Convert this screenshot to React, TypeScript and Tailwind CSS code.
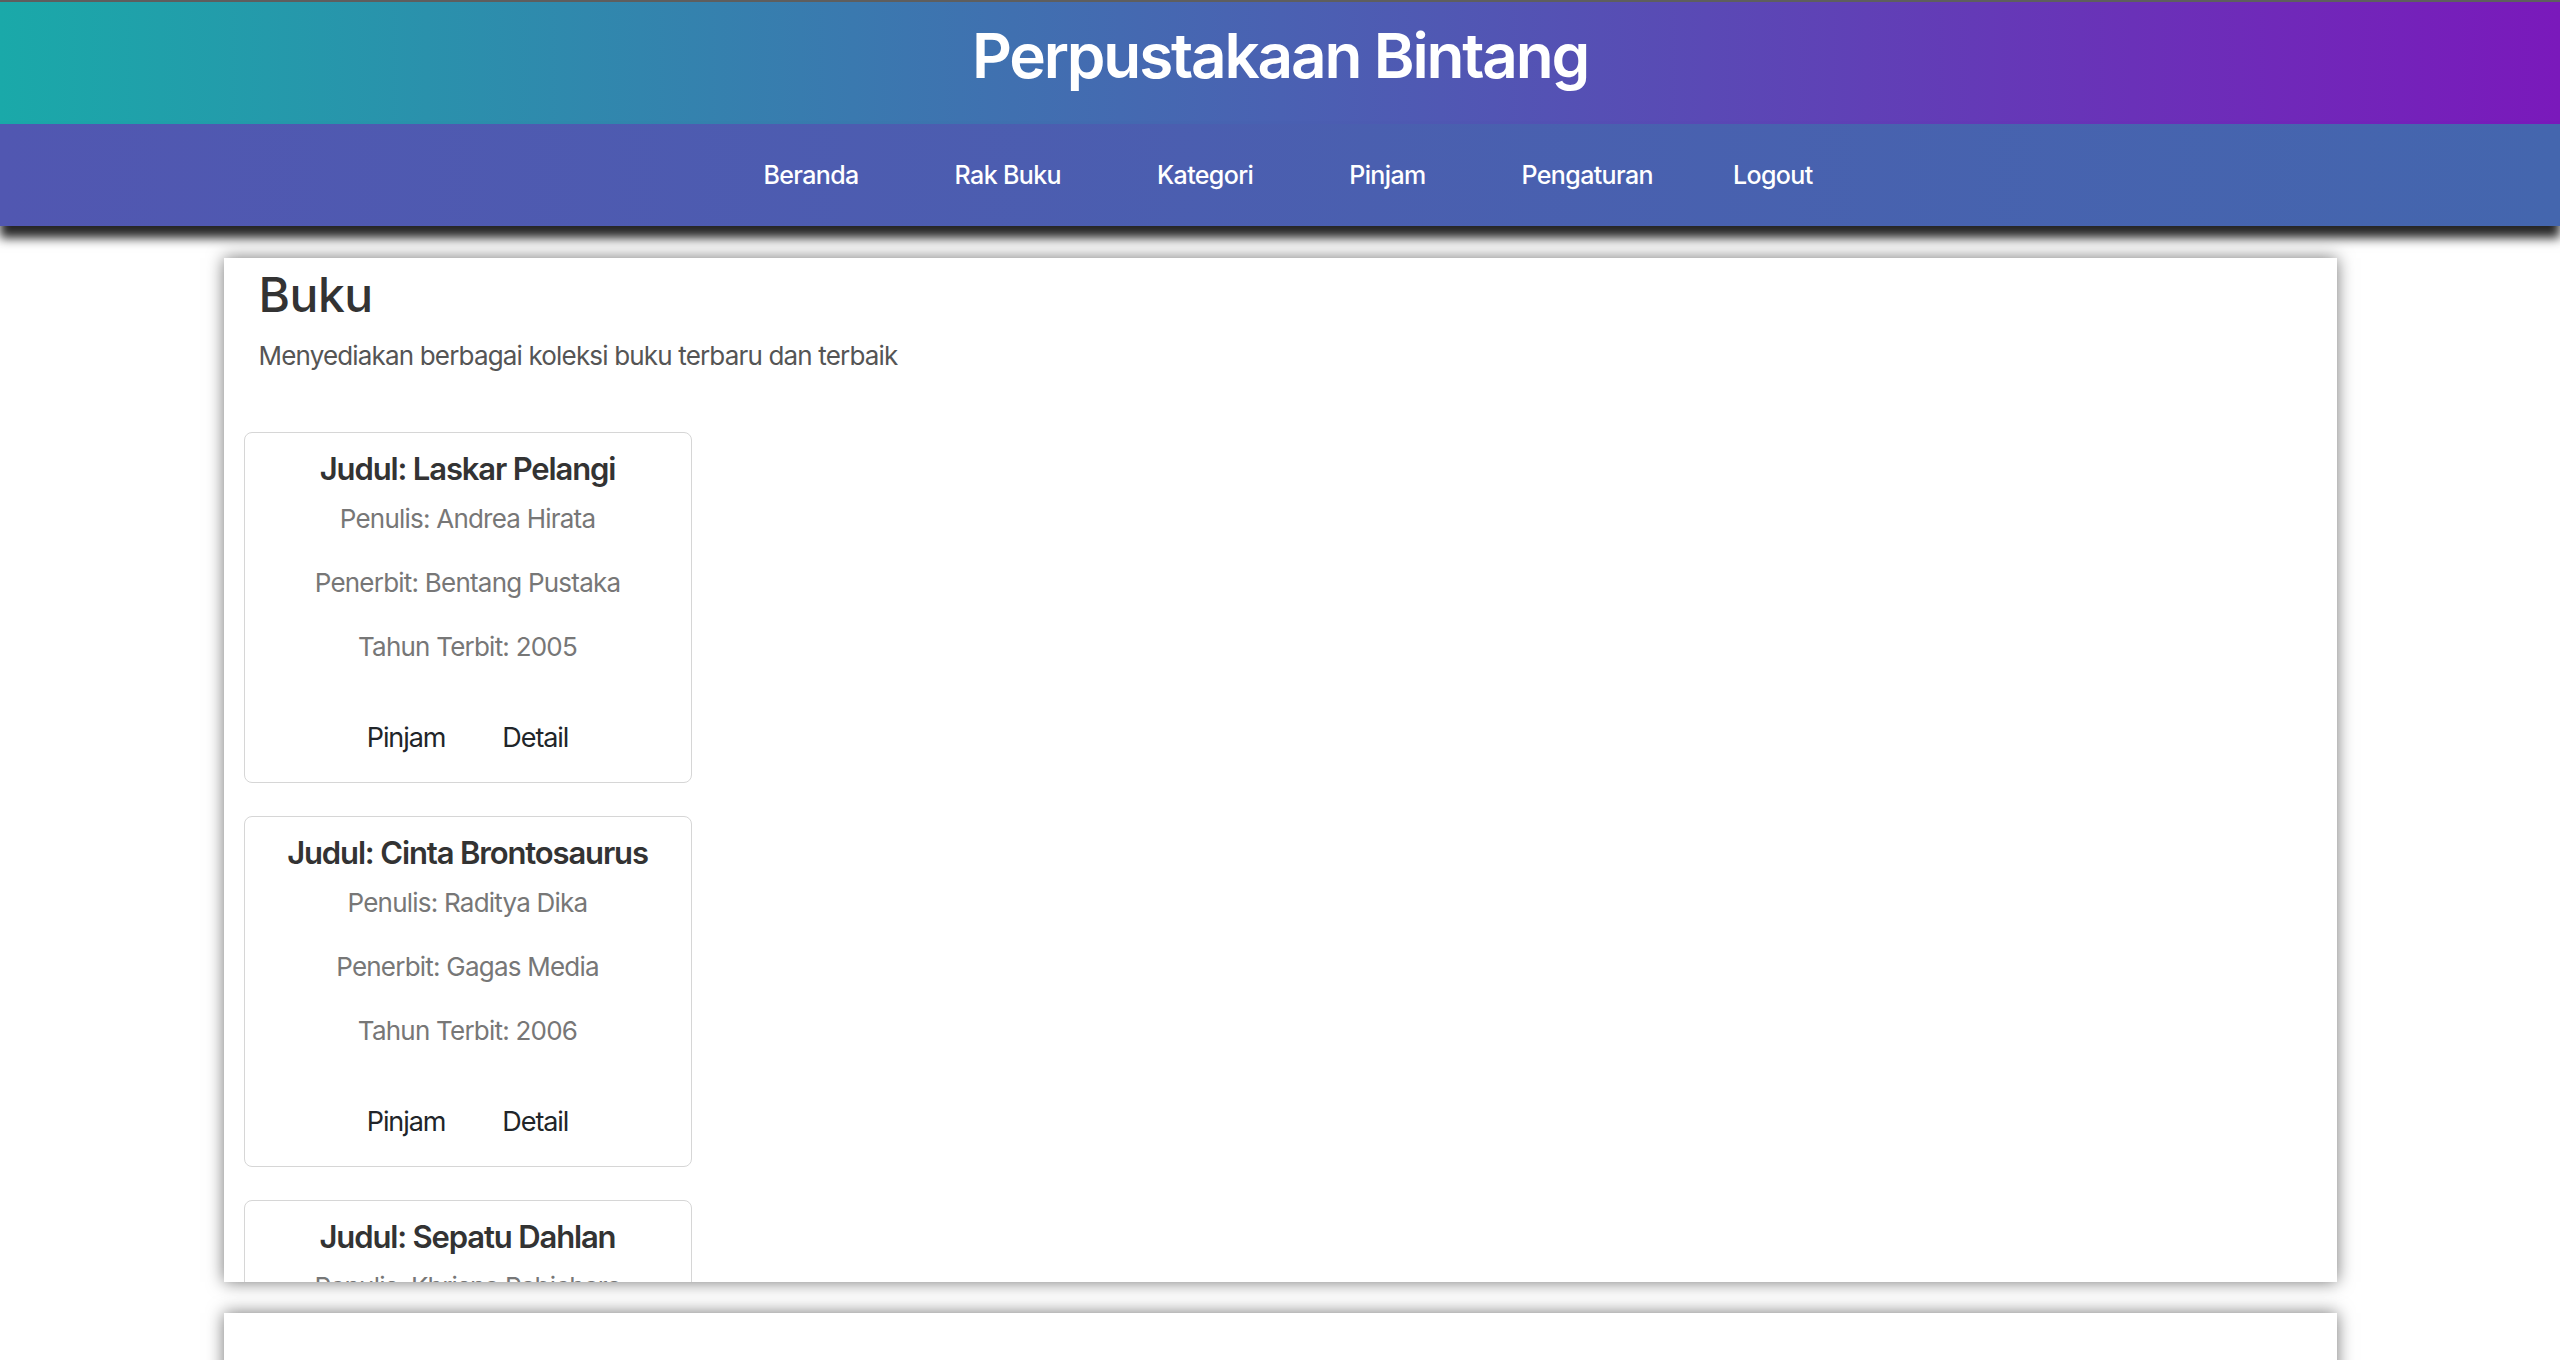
const menu = ["Beranda", "Rak Buku", "Kategori", "Pinjam", "Pengaturan"];

const books = [
  { judul: "Laskar Pelangi", penulis: "Andrea Hirata", penerbit: "Bentang Pustaka", tahun: "2005" },
  { judul: "Cinta Brontosaurus", penulis: "Raditya Dika", penerbit: "Gagas Media", tahun: "2006" },
  { judul: "Sepatu Dahlan", penulis: "Khrisna Pabichara", penerbit: "Noura Books", tahun: "2012" },
];

function BookCard({ book }: { book: (typeof books)[number] }) {
  return (
    <div className="w-[448px] shrink-0 border border-[#d6d6d6] rounded-lg pt-5 pb-[31px] flex flex-col items-center text-center">
      <h3 className="text-[31px] leading-none font-semibold tracking-[-0.037em] text-[#333]">Judul: {book.judul}</h3>
      <div className="mt-[22px] flex flex-col gap-[38px] text-[26px] leading-none tracking-[-0.03em] text-[#777]">
        <p>Penulis: {book.penulis}</p>
        <p>Penerbit: {book.penerbit}</p>
        <p>Tahun Terbit: {book.tahun}</p>
      </div>
      <div className="mt-[64px] flex gap-[57px] text-[27px] leading-none tracking-[-0.04em] text-[#212529]">
        <button>Pinjam</button>
        <button>Detail</button>
      </div>
    </div>
  );
}

export default function App() {
  return (
    <div className="h-[1360px] overflow-hidden bg-white font-['Inter',sans-serif]">
      <header className="h-[124px] border-t-2 border-[#5e5e5e] bg-[linear-gradient(to_right,#1aa9a9,#7a19bb)] flex justify-center pt-[23px]">
        <h1 className="text-[62px] leading-none font-semibold tracking-[-0.035em] text-white">Perpustakaan Bintang</h1>
      </header>
      <nav className="relative z-10 h-[102px] flex justify-center items-center bg-[linear-gradient(to_right,#5157b1,#4466ae)] shadow-[0_12px_10px_rgba(0,0,0,0.85)]">
        {menu.map((m) => (
          <a key={m} href="#" className="px-12 text-[25px] leading-none font-medium tracking-[-0.025em] text-white">
            {m}
          </a>
        ))}
        <a href="#" className="px-8 text-[25px] leading-none font-medium tracking-[-0.025em] text-white">
          Logout
        </a>
      </nav>
      <main className="pt-8 flex flex-col items-center gap-[31px]">
        <section className="w-[2113px] h-[1024px] shrink-0 overflow-hidden bg-white shadow-[0_0_16px_rgba(0,0,0,0.55)] px-5">
          <div className="pl-[15px] pt-[13px]">
            <h2 className="text-[48px] leading-none font-medium tracking-[-0.01em] text-[#333]">Buku</h2>
            <p className="mt-6 text-[26px] leading-none tracking-[-0.032em] text-[#555]">
              Menyediakan berbagai koleksi buku terbaru dan terbaik
            </p>
          </div>
          <div className="mt-[63px] flex flex-col gap-[33px]">
            {books.map((b) => (
              <BookCard key={b.judul} book={b} />
            ))}
          </div>
        </section>
        <section className="w-[2113px] h-[400px] shrink-0 bg-white shadow-[0_0_16px_rgba(0,0,0,0.55)]" />
      </main>
    </div>
  );
}
